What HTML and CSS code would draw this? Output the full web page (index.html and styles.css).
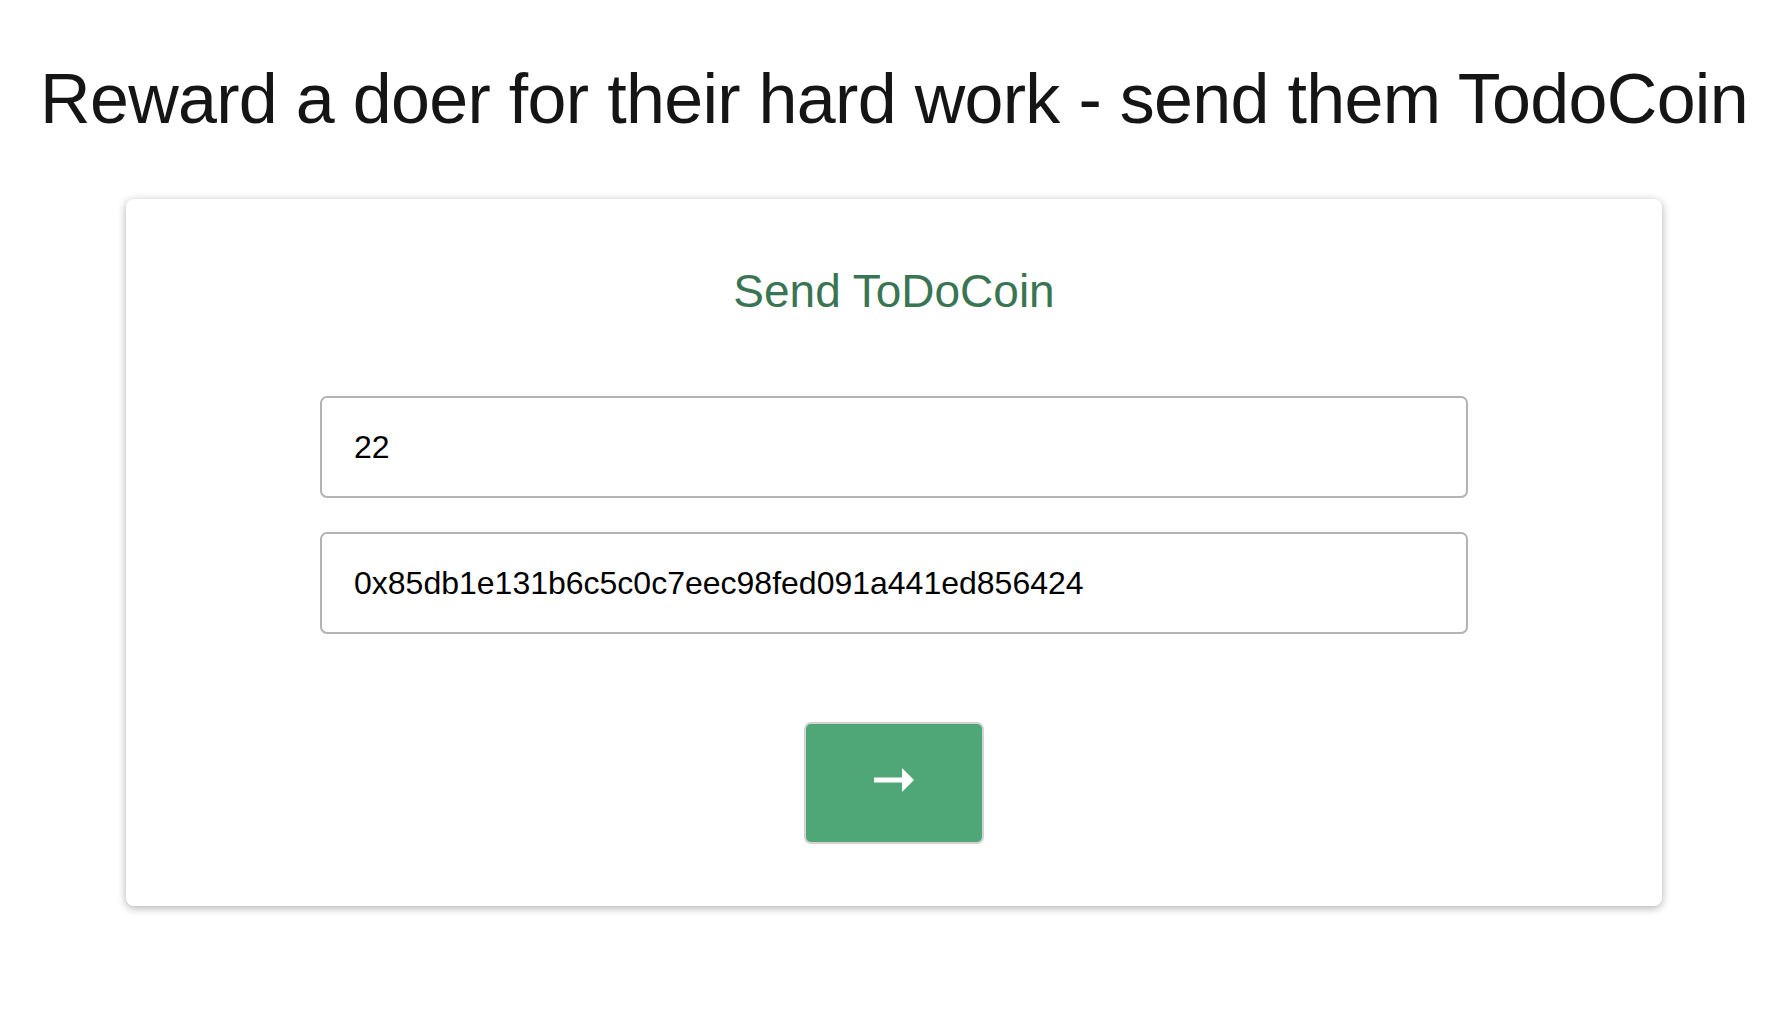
FILE: index.html
```html
<!DOCTYPE html>
<html lang="en">
<head>
  <meta charset="UTF-8">
  <meta name="viewport" content="width=device-width, initial-scale=1.0">
  <title>Send TodoCoin</title>
  <link rel="stylesheet" href="styles.css">
</head>
<body>

<div class="page">
  <h1 class="page-title">Reward a doer for their hard work - send them TodoCoin</h1>

  <form class="send-card" id="sendForm">
    <h2 class="send-title">Send ToDoCoin</h2>

    <div class="send-fields">
      <input type="number" id="amount" class="send-input" value="22">
      <input type="text" id="address" class="send-input" value="0x85db1e131b6c5c0c7eec98fed091a441ed856424">
    </div>

    <button type="submit" class="send-btn">
      <svg viewBox="0 0 40 24" width="40" height="24">
        <rect x="0" y="9.5" width="30" height="5" fill="white" />
        <polygon points="28,0 40,12 28,24" fill="white" />
      </svg>
    </button>
  </form>
</div>

</body>
</html>
```

FILE: styles.css
```css
body {
  font-family: "Liberation Sans", Arial, sans-serif;
  background-color: #fff;
  margin: 0 0 0 8px;
  color: #151515;
}

.page {
  display: flex;
  flex-direction: column;
  align-items: center;
  padding-bottom: 60px;
}

.page-title {
  font-size: 70px;
  font-weight: normal;
  letter-spacing: -0.7px;
  line-height: 84px;
  white-space: nowrap;
  margin: 57px 0 0 0;
  color: #151515;
}

.send-card {
  width: 1536px;
  box-sizing: border-box;
  margin-top: 58px;
  padding: 65px 0 62px;
  background: #fff;
  border-radius: 8px;
  box-shadow: 0 2px 8px rgba(0, 0, 0, 0.32);
  display: flex;
  flex-direction: column;
  align-items: center;
}

.send-title {
  font-size: 46px;
  font-weight: normal;
  line-height: 54px;
  margin: 0;
  color: #3a7553;
}

.send-fields {
  margin-top: 78px;
  display: flex;
  flex-direction: column;
  gap: 34px;
}

.send-input {
  width: 1148px;
  height: 102px;
  box-sizing: border-box;
  padding: 0 32px;
  font-family: "Liberation Sans", Arial, sans-serif;
  font-size: 32px;
  color: #000;
  border: 2px solid #b3b3b3;
  border-radius: 7px;
  outline: none;
  background: #fff;
}

.send-input::-webkit-outer-spin-button,
.send-input::-webkit-inner-spin-button {
  -webkit-appearance: none;
  margin: 0;
}

.send-btn {
  margin-top: 88px;
  width: 180px;
  height: 122px;
  background-color: #4fa677;
  border: 2px solid #d2d2d2;
  border-radius: 7px;
  display: flex;
  justify-content: center;
  align-items: center;
  cursor: pointer;
  padding: 0 0 6px 0;
}

.send-btn svg {
  width: 40px;
  height: 24px;
}
```
